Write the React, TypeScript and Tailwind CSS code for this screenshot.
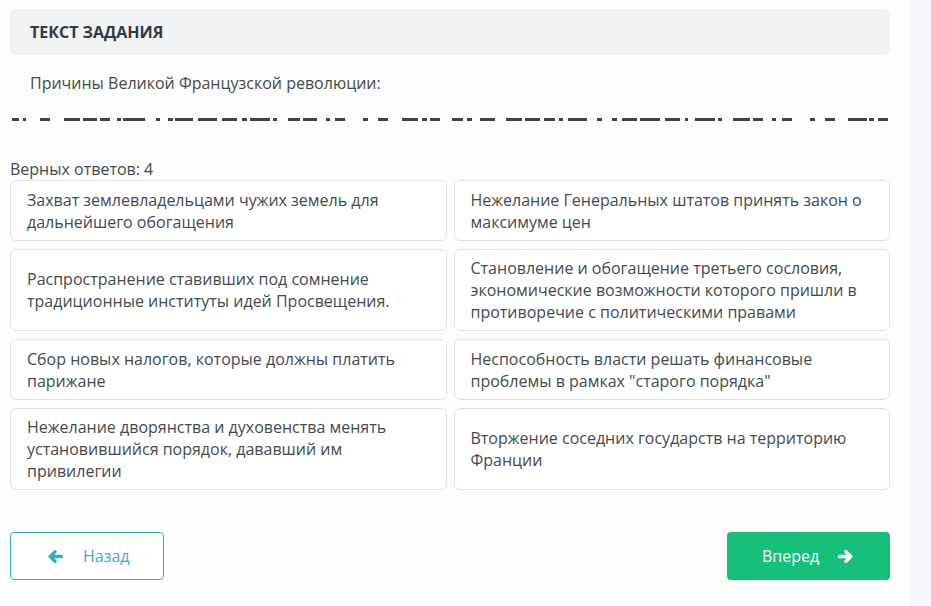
import React from "react";

const dashes: [number, number][] = [
  [12, 19], [23, 26], [40, 50], [64, 80], [83, 97], [100, 110], [117, 121], [123, 145], [156, 160],
  [168, 173], [175, 193], [198, 217], [222, 237], [242, 247], [250, 270], [273, 277], [288, 300], [303, 317],
  [326, 330], [335, 345], [363, 368], [378, 388], [402, 418], [422, 427], [430, 440], [452, 463], [467, 472],
  [480, 495], [506, 522], [525, 540], [544, 555], [559, 563], [568, 587], [597, 602], [612, 617], [622, 637],
  [640, 660], [665, 680], [685, 688], [695, 715], [718, 722], [733, 750], [753, 763], [772, 776], [782, 792],
  [810, 815], [825, 835], [848, 867], [869, 874], [878, 888],
];

const answers: string[] = [
  "Захват землевладельцами чужих земель для дальнейшего обогащения",
  "Нежелание Генеральных штатов принять закон о максимуме цен",
  "Распространение ставивших под сомнение традиционные институты идей Просвещения.",
  "Становление и обогащение третьего сословия, экономические возможности которого пришли в противоречие с политическими правами",
  "Сбор новых налогов, которые должны платить парижане",
  "Неспособность власти решать финансовые проблемы в рамках \"старого порядка\"",
  "Нежелание дворянства и духовенства менять установившийся порядок, дававший им привилегии",
  "Вторжение соседних государств на территорию Франции",
];

function Arrow({ dir, color }: { dir: "left" | "right"; color: string }) {
  return (
    <svg
      width="15"
      height="13"
      viewBox="0 0 15 13"
      className="block"
      style={{ transform: dir === "right" ? "scaleX(-1)" : undefined }}
    >
      <path d="M7 1.8 L2.2 6.5 L7 11.2" fill="none" stroke={color} strokeWidth="3.4" strokeLinecap="round" strokeLinejoin="round" />
      <path d="M3 6.5 H13.3" fill="none" stroke={color} strokeWidth="3.6" strokeLinecap="round" />
    </svg>
  );
}

export default function App() {
  return (
    <div
      className="flex w-[931px] h-[606px] overflow-hidden bg-[#fdfdfb] text-[#454a50]"
      style={{ fontFamily: '"Open Sans", "Noto Sans", sans-serif' }}
    >
      <div className="w-[910px] shrink-0 pl-[10px] pr-[20px]">
        <div className="mt-[9px] h-[46px] rounded-md bg-[#f1f2f4] px-5 flex items-center">
          <span className="text-[16px] font-bold text-[#343a40]">ТЕКСТ ЗАДАНИЯ</span>
        </div>
        <div className="mt-[17px] px-5 text-[16px] leading-[22px]">Причины Великой Французской революции:</div>
        <svg className="block mt-[24px] -ml-[10px]" width="900" height="3">
          {dashes.map(([a, b], i) => (
            <rect key={i} x={a} y={0} width={b - a} height={3} fill="#3d4148" />
          ))}
        </svg>
        <div className="mt-[37px] text-[16px] leading-[22px]">Верных ответов: 4</div>
        <div className="grid grid-cols-2 gap-x-[7px] gap-y-[8px]">
          {answers.map((t, i) => (
            <div
              key={i}
              className="flex min-h-[61px] items-center rounded-[6px] border border-[#e1e2e4] bg-white px-4 py-[7px] text-[16px] leading-[22px]"
            >
              <span>{t}</span>
            </div>
          ))}
        </div>
        <div className="mt-[42px] flex justify-between">
          <button className="flex h-[48px] w-[154px] items-center rounded-[4px] border border-[#2fb0c1] bg-white pl-[37px] text-[16px] text-[#3aaebf]">
            <Arrow dir="left" color="#2fb0c1" />
            <span className="ml-[20px]">Назад</span>
          </button>
          <button className="flex h-[48px] w-[163px] items-center rounded-[4px] bg-[#16c07b] pl-[35px] text-[16px] text-white">
            <span>Вперед</span>
            <span className="ml-[19px]">
              <Arrow dir="right" color="#ffffff" />
            </span>
          </button>
        </div>
      </div>
      <div className="flex-1 bg-[#f4f6f9]" />
    </div>
  );
}
